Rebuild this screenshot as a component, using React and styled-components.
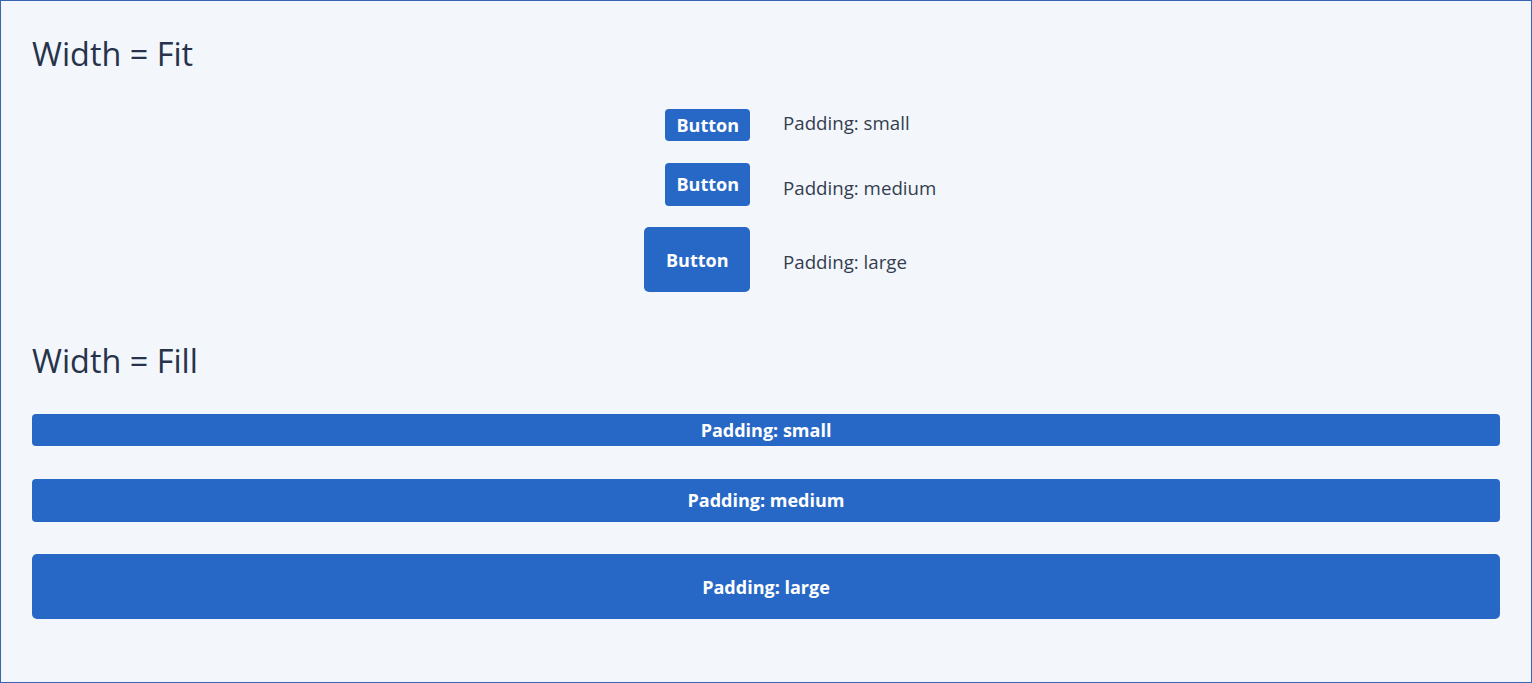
import React from 'react';
import styled, { createGlobalStyle } from 'styled-components';

const GlobalStyle = createGlobalStyle`
    html, body {
        margin: 0;
        padding: 0;
        background: #f3f7fc;
    }
    * {
        box-sizing: border-box;
    }
`;

// padding per size: vertical, horizontal, and label offset in the fit grid
const sizes = {
    small: { v: '4px', h: '11px', label: '0px' },
    medium: { v: '9.5px', h: '11px', label: '11px' },
    large: { v: '20.5px', h: '21.5px', label: '21px' },
};

const Page = styled.div`
    height: 683px;
    border: 1px solid #3566b3;
    background: #f3f7fc;
    padding: 32px 31px 0;
    font-family: "Open Sans", "Noto Sans", sans-serif;
`;

const Heading = styled.h2`
    margin: 0;
    font-size: 32.4px;
    line-height: 40px;
    font-weight: 400;
    color: #26334a;
`;

const FitGrid = styled.div`
    display: grid;
    grid-template-columns: 1fr 1fr;
    column-gap: 32px;
    row-gap: 21.5px;
    margin: 36px 0 48px;
`;

const FitCell = styled.div`
    display: flex;
    justify-content: flex-end;
    align-items: flex-start;
`;

const Button = styled.button`
    border: none;
    margin: 0;
    background: #2768c6;
    color: #ffffff;
    font-family: inherit;
    font-size: 18px;
    font-weight: 700;
    line-height: 24px;
    border-radius: ${p => (p.size === 'large' ? '5px' : '4px')};
    padding: ${p => sizes[p.size].v} ${p => sizes[p.size].h};
    width: ${p => (p.fill ? '100%' : 'auto')};
    display: block;
    cursor: pointer;
`;

const Label = styled.div`
    font-size: 18.7px;
    line-height: 28px;
    color: #333d4f;
    padding-left: 1px;
    padding-top: ${p => sizes[p.size].label};
`;

const FillList = styled.div`
    display: flex;
    flex-direction: column;
    gap: 32.5px;
    margin-top: 34px;
`;

const rows = ['small', 'medium', 'large'];

export default function App() {
    return (
        <>
            <GlobalStyle />
            <Page>
                <Heading>Width = Fit</Heading>
                <FitGrid>
                    {rows.map(size => (
                        <React.Fragment key={size}>
                            <FitCell>
                                <Button size={size}>Button</Button>
                            </FitCell>
                            <Label size={size}>Padding: {size}</Label>
                        </React.Fragment>
                    ))}
                </FitGrid>
                <Heading>Width = Fill</Heading>
                <FillList>
                    {rows.map(size => (
                        <Button key={size} size={size} fill>
                            Padding: {size}
                        </Button>
                    ))}
                </FillList>
            </Page>
        </>
    );
}
